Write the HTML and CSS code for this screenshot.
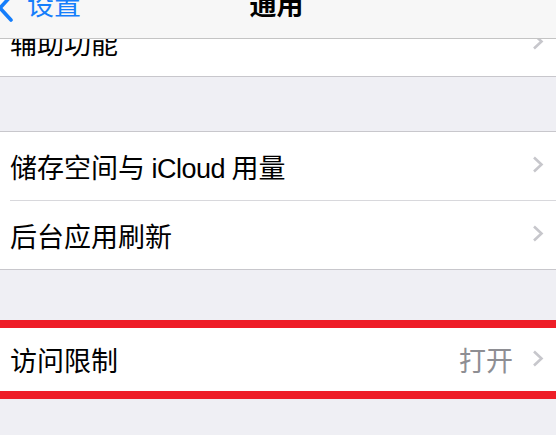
FILE: index.html
```html
<!DOCTYPE html>
<html lang="zh-CN">
<head>
<meta charset="utf-8">
<link rel="stylesheet" href="styles.css">
</head>
<body>
<div class="screen">
  <div class="navbar">
    <div class="nav-inner">
      <div class="back">
        <svg class="back-chev" width="18" height="30" viewBox="0 0 18 30"><path d="M14 3 L3 15 L14 27" fill="none" stroke="#157efb" stroke-width="3.6" stroke-linecap="round" stroke-linejoin="round"/></svg>
        <span class="back-label">设置</span>
      </div>
      <div class="title">通用</div>
    </div>
  </div>

  <div class="group first">
    <div class="row"><span class="label">辅助功能</span><span class="chev"></span></div>
  </div>

  <div class="group">
    <div class="row tall sep"><span class="label">储存空间与 <span class="latin">iCloud</span> 用量</span><span class="chev"></span></div>
    <div class="row tall"><span class="label">后台应用刷新</span><span class="chev"></span></div>
  </div>

  <div class="group marked">
    <div class="row short"><span class="label">访问限制</span><span class="value">打开</span><span class="chev"></span></div>
  </div>
</div>
</body>
</html>
```

FILE: styles.css
```css
html, body {
  margin: 0;
  padding: 0;
}
body {
  background: #efeff4;
  font-family: "Liberation Sans", "Noto Sans CJK SC", sans-serif;
  color: #000;
}
.screen {
  position: relative;
  width: 556px;
  height: 435px;
  overflow: hidden;
  background: #efeff4;
  padding-top: 9px;
  box-sizing: border-box;
}
.navbar {
  position: absolute;
  top: 0;
  left: 0;
  right: 0;
  height: 38px;
  background: #f7f7f7;
  border-bottom: 1px solid #c4c4c4;
  z-index: 2;
  overflow: hidden;
}
.nav-inner {
  position: relative;
  height: 34px;
  margin-top: -11px;
  display: flex;
  align-items: center;
  justify-content: center;
}
.back {
  position: absolute;
  left: 0;
  top: 0;
  height: 34px;
  display: flex;
  align-items: center;
  color: #157efb;
}
.back-chev {
  margin-left: -3px;
  margin-top: 3px;
}
.back-label {
  font-size: 27px;
  line-height: 34px;
  margin-left: 12px;
}
.title {
  font-size: 27px;
  font-weight: 600;
  line-height: 34px;
  margin-left: -3px;
}
.group {
  background: #fff;
  border-top: 1px solid #c8c7cc;
  border-bottom: 1px solid #c8c7cc;
  margin-bottom: 54px;
}
.group.first {
  border-top: none;
}
.row {
  position: relative;
  height: 67px;
  display: flex;
  align-items: center;
  padding: 0 12px 0 10px;
}
.row.tall {
  height: 68px;
}
.row.sep::after {
  content: "";
  position: absolute;
  left: 10px;
  right: 0;
  bottom: -1px;
  height: 1px;
  background: #d8d8dc;
}
.row.sep {
  margin-bottom: 1px;
}
.label {
  font-size: 27px;
  flex: 1;
  white-space: nowrap;
  word-spacing: -1px;
}
.latin {
  letter-spacing: -0.5px;
}
.value {
  font-size: 27px;
  color: #8e8e93;
  margin-right: 19px;
}
.chev {
  width: 12px;
  height: 17px;
  display: block;
  background: no-repeat center / 12px 17px url("data:image/svg+xml;utf8,<svg xmlns='http://www.w3.org/2000/svg' width='12' height='17' viewBox='0 0 12 17'><path d='M2 1.5 L9.5 8.5 L2 15.5' fill='none' stroke='%23c7c7cc' stroke-width='2.6'/></svg>");
  margin-top: -3px;
}
.group.marked {
  margin-top: -4px;
  border-top: 8px solid #ee1d27;
  border-bottom: 8px solid #ee1d27;
}
.row.short {
  height: 63px;
}
```
